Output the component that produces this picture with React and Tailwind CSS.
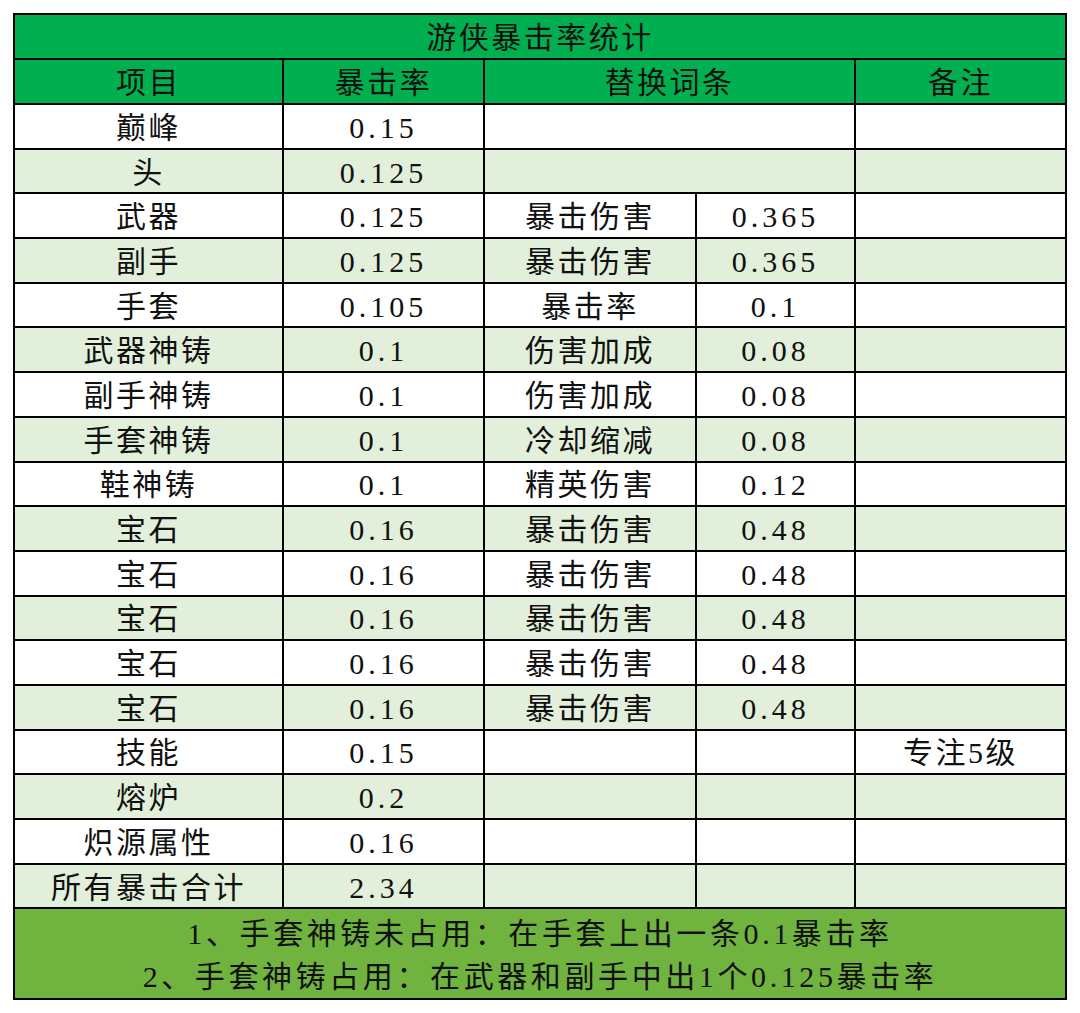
import React from 'react'

const rows = [
  ['巅峰', '0.15', null, null, ''],
  ['头', '0.125', null, null, ''],
  ['武器', '0.125', '暴击伤害', '0.365', ''],
  ['副手', '0.125', '暴击伤害', '0.365', ''],
  ['手套', '0.105', '暴击率', '0.1', ''],
  ['武器神铸', '0.1', '伤害加成', '0.08', ''],
  ['副手神铸', '0.1', '伤害加成', '0.08', ''],
  ['手套神铸', '0.1', '冷却缩减', '0.08', ''],
  ['鞋神铸', '0.1', '精英伤害', '0.12', ''],
  ['宝石', '0.16', '暴击伤害', '0.48', ''],
  ['宝石', '0.16', '暴击伤害', '0.48', ''],
  ['宝石', '0.16', '暴击伤害', '0.48', ''],
  ['宝石', '0.16', '暴击伤害', '0.48', ''],
  ['宝石', '0.16', '暴击伤害', '0.48', ''],
  ['技能', '0.15', '', '', '专注5级'],
  ['熔炉', '0.2', '', '', ''],
  ['炽源属性', '0.16', '', '', ''],
  ['所有暴击合计', '2.34', '', '', ''],
]

const cell = 'border-2 border-black text-center p-0 pt-[3px] leading-none'
const num = 'border-2 border-black text-center p-0 pt-[3px] leading-none tracking-[4px]'

const App = () => {
  return (
    <div className="w-[1080px] h-[1013px] bg-white pt-[13px] pl-[13px]">
      <table
        className="table-fixed border-collapse border-2 border-black text-[30px] tracking-[2.5px] text-[#111]"
        style={{ fontFamily: '"Liberation Serif", "Noto Sans CJK SC", serif' }}
      >
        <colgroup>
          <col className="w-[269px]" />
          <col className="w-[201px]" />
          <col className="w-[212px]" />
          <col className="w-[159px]" />
          <col className="w-[211px]" />
        </colgroup>
        <tbody>
          <tr className="h-[45px] bg-[#00b050]">
            <td colSpan={5} className={cell}>游侠暴击率统计</td>
          </tr>
          <tr className="h-[45px] bg-[#00b050]">
            <td className={cell}>项目</td>
            <td className={cell}>暴击率</td>
            <td colSpan={2} className={cell}>替换词条</td>
            <td className={cell}>备注</td>
          </tr>
          {rows.map((r, i) => (
            <tr key={i} className={`h-[44.7px] ${i % 2 ? 'bg-[#e2efda]' : 'bg-white'}`}>
              <td className={cell}>{r[0]}</td>
              <td className={num}>{r[1]}</td>
              {r[2] === null ? (
                <td colSpan={2} className={cell}></td>
              ) : (
                <>
                  <td className={cell}>{r[2]}</td>
                  <td className={num}>{r[3]}</td>
                </>
              )}
              <td className={cell}>{r[4]}</td>
            </tr>
          ))}
          <tr className="h-[90px] bg-[#70b33f]">
            <td colSpan={5} className="border-2 border-black text-center p-0 pt-[3px] leading-[43px] tracking-[3.6px]">
              <div>1、手套神铸未占用：在手套上出一条0.1暴击率</div>
              <div>2、手套神铸占用：在武器和副手中出1个0.125暴击率</div>
            </td>
          </tr>
        </tbody>
      </table>
    </div>
  )
}

export default App
